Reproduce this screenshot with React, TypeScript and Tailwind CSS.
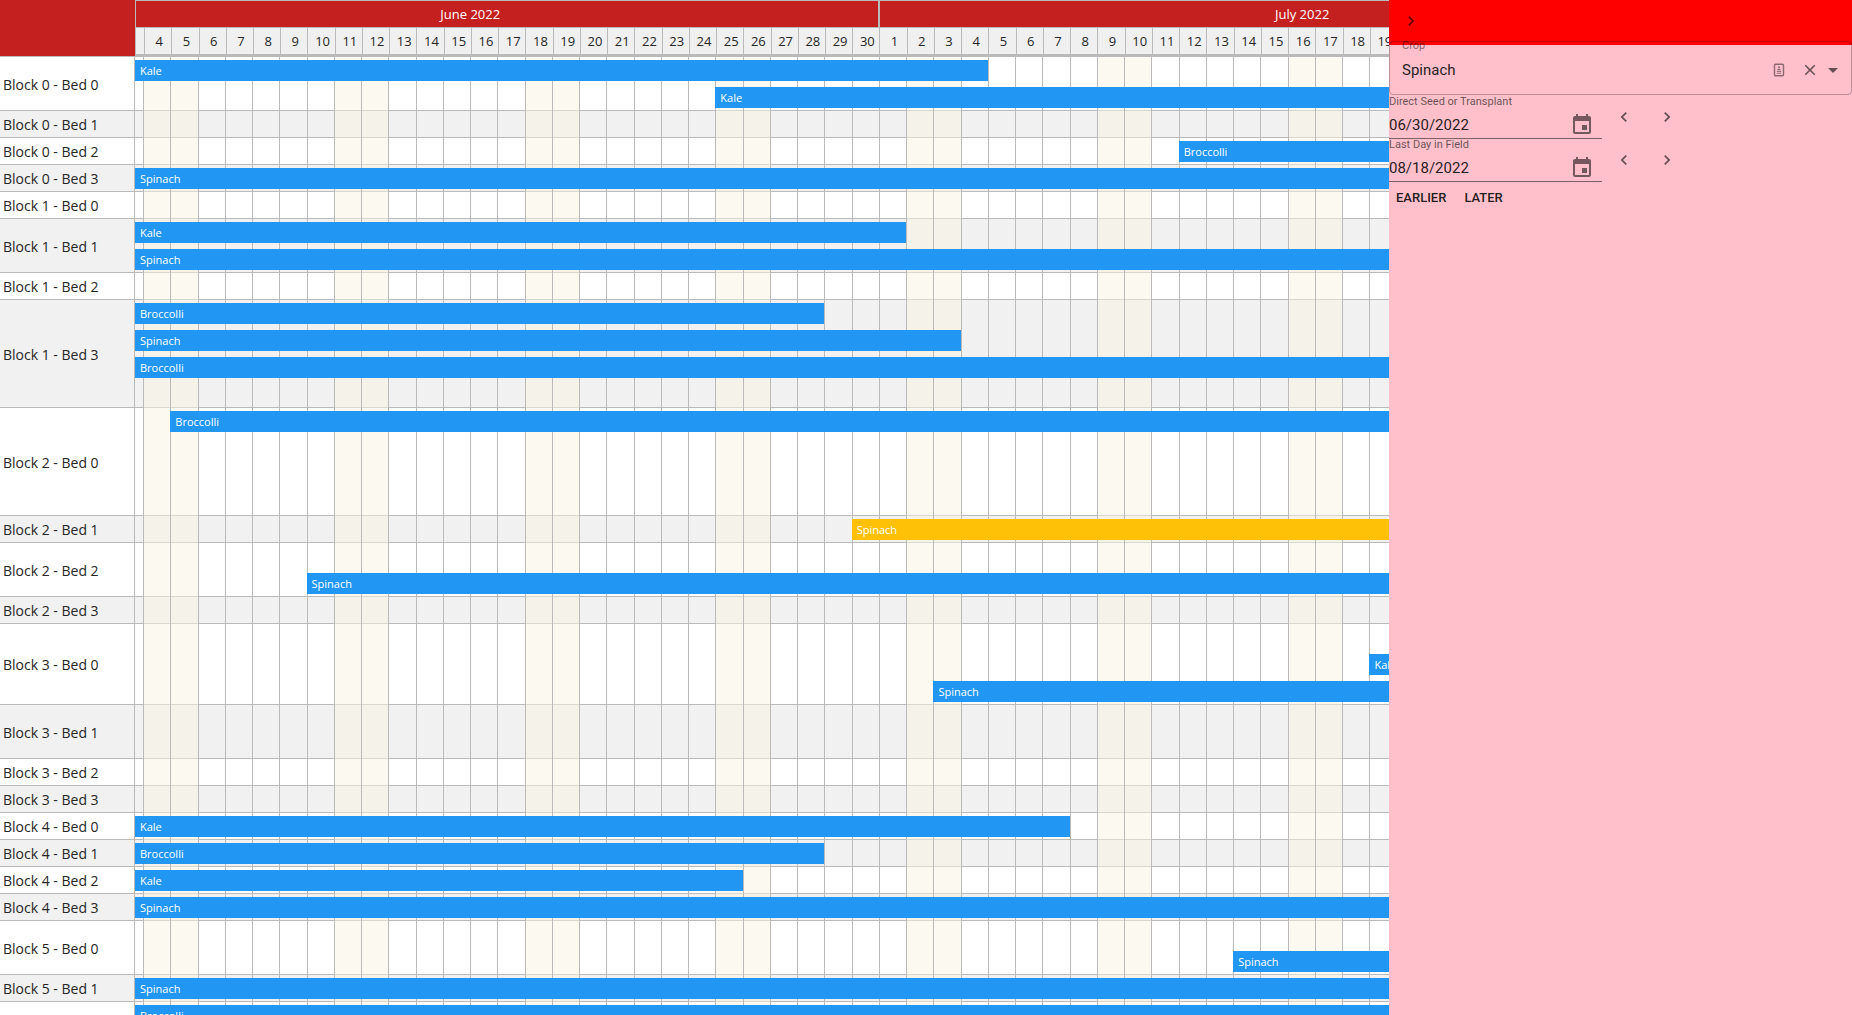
import React, { useState } from "react";

type Bar = { crop: string; lane: number; start?: string; end?: string; selected?: boolean };
type Bed = { name: string; lanes: number; bars?: Bar[] };

const beds: Bed[] = [
  { name: "Block 0 - Bed 0", lanes: 2, bars: [{ crop: "Kale", lane: 1, end: "7/5" }, { crop: "Kale", lane: 2, start: "6/25" }] },
  { name: "Block 0 - Bed 1", lanes: 1 },
  { name: "Block 0 - Bed 2", lanes: 1, bars: [{ crop: "Broccolli", lane: 1, start: "7/12" }] },
  { name: "Block 0 - Bed 3", lanes: 1, bars: [{ crop: "Spinach", lane: 1 }] },
  { name: "Block 1 - Bed 0", lanes: 1 },
  { name: "Block 1 - Bed 1", lanes: 2, bars: [{ crop: "Kale", lane: 1, end: "7/2" }, { crop: "Spinach", lane: 2 }] },
  { name: "Block 1 - Bed 2", lanes: 1 },
  {
    name: "Block 1 - Bed 3",
    lanes: 4,
    bars: [
      { crop: "Broccolli", lane: 1, end: "6/29" },
      { crop: "Spinach", lane: 2, end: "7/4" },
      { crop: "Broccolli", lane: 3 },
    ],
  },
  { name: "Block 2 - Bed 0", lanes: 4, bars: [{ crop: "Broccolli", lane: 1, start: "6/5" }] },
  { name: "Block 2 - Bed 1", lanes: 1, bars: [{ crop: "Spinach", lane: 1, start: "6/30", selected: true }] },
  { name: "Block 2 - Bed 2", lanes: 2, bars: [{ crop: "Spinach", lane: 2, start: "6/10" }] },
  { name: "Block 2 - Bed 3", lanes: 1 },
  { name: "Block 3 - Bed 0", lanes: 3, bars: [{ crop: "Kale", lane: 2, start: "7/19" }, { crop: "Spinach", lane: 3, start: "7/3" }] },
  { name: "Block 3 - Bed 1", lanes: 2 },
  { name: "Block 3 - Bed 2", lanes: 1 },
  { name: "Block 3 - Bed 3", lanes: 1 },
  { name: "Block 4 - Bed 0", lanes: 1, bars: [{ crop: "Kale", lane: 1, end: "7/8" }] },
  { name: "Block 4 - Bed 1", lanes: 1, bars: [{ crop: "Broccolli", lane: 1, end: "6/29" }] },
  { name: "Block 4 - Bed 2", lanes: 1, bars: [{ crop: "Kale", lane: 1, end: "6/26" }] },
  { name: "Block 4 - Bed 3", lanes: 1, bars: [{ crop: "Spinach", lane: 1 }] },
  { name: "Block 5 - Bed 0", lanes: 2, bars: [{ crop: "Spinach", lane: 2, start: "7/14" }] },
  { name: "Block 5 - Bed 1", lanes: 1, bars: [{ crop: "Spinach", lane: 1 }] },
  { name: "Block 5 - Bed 2", lanes: 4, bars: [{ crop: "Broccolli", lane: 1 }] },
];

// The visible window runs from late on June 3 to early on August 5, 2022.
const FIRST_LINE = 1;
const LAST_LINE = 65;
const dayGrid =
  "grid grid-cols-[minmax(0,0.295fr)_repeat(62,minmax(0,1fr))_minmax(0,0.705fr)]";
const days = Array.from({ length: 64 }, (_, i) => new Date(2022, 5, 3 + i));

function gridLine(date: string | undefined, fallback: number) {
  if (!date) return fallback;
  const [month, day] = date.split("/").map(Number);
  return month === 6 ? day - 2 : day + 28;
}

function Timeline() {
  return (
    <div className="min-w-0 text-[#262626]">
      <div className="flex h-[57px]">
        <div className="w-[135px] shrink-0 border-b border-[#bababa] bg-[#c52020]" />
        <div className="min-w-0 flex-1 overflow-hidden border-l border-t border-b-3 border-[#bababa]">
          <div className={`${dayGrid} h-[27px] border-b border-[#bababa] bg-[#c52020] text-[13px] leading-[26px] text-white`}>
            {/* June begins before the visible window, so its cell reaches past the left edge */}
            <div className="col-start-1 col-end-29 -ml-[74px] border-r border-[#bababa] text-center">June 2022</div>
            <div className="col-start-29 col-end-60 border-l border-[#bababa] text-center">July 2022</div>
            <div className="col-start-60 col-end-65 border-l border-[#bababa] text-center">August 2022</div>
          </div>
          <div className={`${dayGrid} h-[26px] bg-[#f0f0f0] text-[13px] leading-[26px]`}>
            {days.map((day, i) => (
              <div key={i} className={i === 0 ? "" : "border-l border-[#bababa] pl-[2px] text-center"}>
                {i > 0 && i < 63 ? day.getDate() : ""}
              </div>
            ))}
          </div>
        </div>
      </div>

      <div className="relative">
        {beds.map((bed, i) => (
          <div key={bed.name} className={`flex border-b border-[#bababa] ${i % 2 ? "bg-[#f1f1f1]" : "bg-white"}`}>
            <div className="flex w-[135px] shrink-0 items-center border-r border-[#bababa] pt-[2px] pl-[3px] text-[14px] leading-5">
              {bed.name}
            </div>
            <div
              className={`${dayGrid} -mb-px min-w-0 flex-1`}
              style={{ gridTemplateRows: `repeat(${bed.lanes}, 27px)` }}
            >
              {bed.bars?.map((bar) => (
                <button
                  key={bar.lane}
                  type="button"
                  className={`z-10 my-[3px] truncate pl-[5px] text-left text-[11px] leading-[20px] text-white ${
                    bar.selected ? "bg-[#ffc107]" : "bg-[#2196f3]"
                  }`}
                  style={{
                    gridRow: bar.lane,
                    gridColumn: `${gridLine(bar.start, FIRST_LINE)} / ${gridLine(bar.end, LAST_LINE)}`,
                  }}
                >
                  {bar.crop}
                </button>
              ))}
            </div>
          </div>
        ))}
        {/* day lines and weekend tint, drawn over the row backgrounds */}
        <div className={`${dayGrid} pointer-events-none absolute inset-y-0 left-[135px] right-0`}>
          {days.map((day, i) => {
            const weekend = day.getDay() === 0 || day.getDay() === 6;
            return (
              <div
                key={i}
                className={`${i === 0 ? "" : "border-l border-[#bababa]"} ${weekend ? "bg-[#faf3e1]/50" : ""}`}
              />
            );
          })}
        </div>
      </div>
    </div>
  );
}

function Icon({ d, className }: { d: string; className: string }) {
  return (
    <svg viewBox="0 0 24 24" className={className} fill="currentColor" aria-hidden="true">
      <path d={d} />
    </svg>
  );
}

const chevronLeft = "M15.41 7.41 14 6l-6 6 6 6 1.41-1.41L10.83 12z";
const chevronRight = "M10 6 8.59 7.41 13.17 12l-4.58 4.59L10 18l6-6z";
const calendar =
  "M17 12h-5v5h5v-5zM16 1v2H8V1H6v2H5c-1.11 0-1.99.9-1.99 2L3 19c0 1.1.89 2 2 2h14c1.1 0 2-.9 2-2V5c0-1.1-.9-2-2-2h-1V1h-2zm3 18H5V8h14v11z";
const cross =
  "M19 6.41 17.59 5 12 10.59 6.41 5 5 6.41 10.59 12 5 17.59 6.41 19 12 13.41 17.59 19 19 17.59 13.41 12z";

function DateField({ id, label, initial }: { id: string; label: string; initial: string }) {
  const [value, setValue] = useState(initial);
  return (
    <div className="flex h-[43px]">
      <div className="w-[213px] border-b border-black/50">
        <label htmlFor={id} className="block h-3 text-[11px] leading-3 text-black/60">
          {label}
        </label>
        <div className="flex h-[30px] items-center pt-[3px]">
          <input
            id={id}
            value={value}
            onChange={(e) => setValue(e.target.value)}
            className="min-w-0 flex-1 bg-transparent text-[15px] leading-5 text-black/87 outline-none"
          />
          <button type="button" aria-label={`Choose date, ${label}`} className="mr-2 text-black/54">
            <Icon d={calendar} className="size-6" />
          </button>
        </div>
      </div>
      <div className="flex items-start pt-[11px] pl-3 text-black/60">
        <button type="button" aria-label={`${label}: previous day`} className="mr-[23px]">
          <Icon d={chevronLeft} className="size-5" />
        </button>
        <button type="button" aria-label={`${label}: next day`}>
          <Icon d={chevronRight} className="size-5" />
        </button>
      </div>
    </div>
  );
}

function DetailsPanel() {
  const [crop, setCrop] = useState("Spinach");
  return (
    <aside className="absolute inset-y-0 right-0 z-20 w-1/4 bg-[#ffc0cb] font-['Roboto',sans-serif]">
      <header className="flex h-[45px] items-center bg-[#ff0000] pb-[3px] pl-3 text-black/60">
        <button type="button" aria-label="Close panel">
          <Icon d={chevronRight} className="size-5" />
        </button>
      </header>
      <div className="relative -mt-1 flex h-[54px] items-center rounded border border-black/25 pt-1 pr-[6px] pl-3">
        <label htmlFor="crop" className="absolute -top-1 left-3 text-[11px] leading-4 text-black/50">
          Crop
        </label>
        <input
          id="crop"
          value={crop}
          onChange={(e) => setCrop(e.target.value)}
          className="min-w-0 flex-1 bg-transparent text-[15px] leading-5 text-black/87 outline-none"
        />
        <svg viewBox="0 0 12 14" className="mr-4 h-[14px] w-3 text-black/45" fill="none" stroke="currentColor" aria-hidden="true">
          <rect x="1.5" y="1.2" width="9" height="11.6" rx="1" strokeWidth="1.4" />
          <circle cx="6" cy="4.2" r="1" fill="currentColor" stroke="none" />
          <path d="M4.2 7.2c0-2 3.6-2 3.6 0z" fill="currentColor" stroke="none" />
          <path d="M3.8 8.5h4.4M3.8 10.3h4.4" strokeWidth="0.9" />
        </svg>
        <button type="button" aria-label="Clear" className="mr-[2px] text-black/60">
          <Icon d={cross} className="size-[18px]" />
        </button>
        <button type="button" aria-label="Open" className="text-black/60">
          <Icon d="M7 10l5 5 5-5z" className="size-6" />
        </button>
      </div>
      <div className="pt-px">
        <DateField id="seed-date" label="Direct Seed or Transplant" initial="06/30/2022" />
        <DateField id="last-date" label="Last Day in Field" initial="08/18/2022" />
      </div>
      <div className="flex gap-[18px] pt-[6px] pl-[7px] text-[13px] leading-5 font-medium text-black/87">
        <button type="button">EARLIER</button>
        <button type="button">LATER</button>
      </div>
    </aside>
  );
}

export default function App() {
  return (
    <main className="relative h-screen overflow-hidden bg-white font-['Open_Sans','Noto_Sans',sans-serif]">
      <Timeline />
      <DetailsPanel />
    </main>
  );
}
